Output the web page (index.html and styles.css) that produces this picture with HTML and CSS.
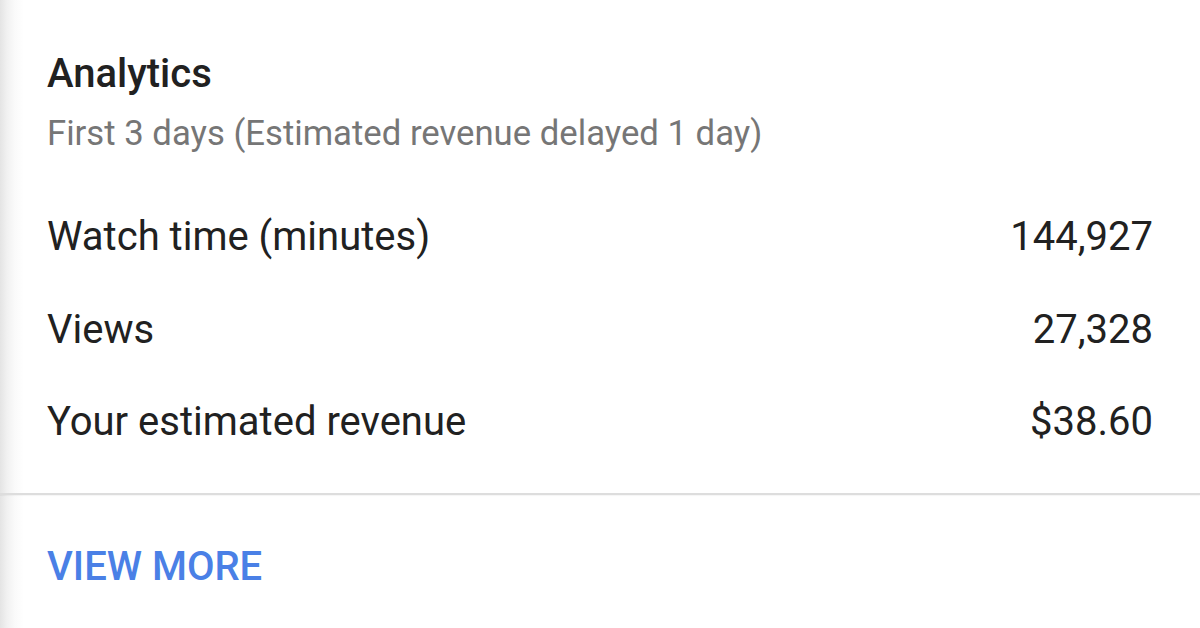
FILE: index.html
```html
<!DOCTYPE html>
<html lang="en">
<head>
<meta charset="utf-8">
<title>Analytics</title>
<link rel="stylesheet" href="styles.css">
</head>
<body>
<main class="card">
  <section class="body">
    <h1 class="title">Analytics</h1>
    <p class="subtitle">First 3 days (Estimated revenue delayed 1 day)</p>
    <ul class="stats">
      <li class="row"><span class="label">Watch time (minutes)</span><span class="value">144,927</span></li>
      <li class="row"><span class="label">Views</span><span class="value">27,328</span></li>
      <li class="row"><span class="label">Your estimated revenue</span><span class="value">$38.60</span></li>
    </ul>
  </section>
  <div class="divider"></div>
  <footer class="actions">
    <a class="more" href="#">VIEW MORE</a>
  </footer>
</main>
</body>
</html>
```

FILE: styles.css
```css
html, body {
  margin: 0;
  padding: 0;
  height: 100%;
  background: #ffffff;
}

body {
  font-family: Roboto, "Noto Sans", "Liberation Sans", sans-serif;
  color: #212121;
  overflow: hidden;
}

.card {
  min-height: 628px;
  background: linear-gradient(to right, #e4e4e4 0, #f1f1f1 7px, #fafafa 15px, #ffffff 24px);
}

.body {
  padding: 50px 47px 0 47px;
}

.title {
  margin: 0;
  font-size: 40px;
  line-height: 48px;
  font-weight: 500;
  color: #212121;
}

.subtitle {
  margin: 15px 0 0 0;
  font-size: 34.7px;
  line-height: 40px;
  font-weight: 400;
  color: #767676;
}

.stats {
  list-style: none;
  margin: 38px 0 0 0;
  padding: 0;
}

.row {
  display: flex;
  justify-content: space-between;
  align-items: baseline;
  font-size: 40px;
  line-height: 92.5px;
  color: #212121;
}

.divider {
  margin-top: 24px;
  height: 2px;
  background: #dddddd;
  box-shadow: 0 1px 1px rgba(0, 0, 0, 0.04);
}

.actions {
  padding: 48px 47px 0 47px;
}

.more {
  display: inline-block;
  font-size: 40px;
  line-height: 48px;
  font-weight: 500;
  color: #4a80e6;
  text-decoration: none;
}
```
